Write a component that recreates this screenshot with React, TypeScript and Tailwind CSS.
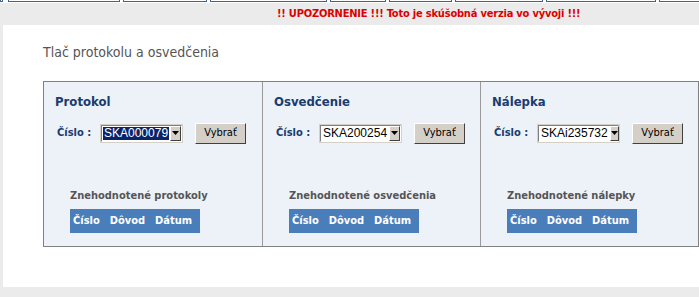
import React from "react";

const FONT = { fontFamily: '"DejaVu Sans Condensed", "DejaVu Sans", Tahoma, sans-serif', fontStretch: "condensed" } as React.CSSProperties;

// top tab strip (bottom edges of the menu tabs)
const TABS = [
  [0, 3],
  [8, 112],
  [123, 84],
  [210, 117],
  [330, 56],
  [389, 63],
  [455, 88],
  [546, 110],
  [659, 60],
];

const COLUMNS = [
  { title: "Protokol", value: "SKA000079", focused: true, lost: "Znehodnotené protokoly" },
  { title: "Osvedčenie", value: "SKA200254", focused: false, lost: "Znehodnotené osvedčenia" },
  { title: "Nálepka", value: "SKAi235732", focused: false, lost: "Znehodnotené nálepky" },
];

function Select({ value, focused }: { value: string; focused: boolean }) {
  return (
    <div className="flex items-center h-[17px] w-[81px] bg-white border border-t-[#808080] border-l-[#808080] border-r-[#ffffff] border-b-[#ffffff] outline outline-1 outline-[#d4d0c8]">
      <div className="flex-1 flex items-center h-full px-[1px]">
        <span
          className={`text-[12px] leading-[13px] px-[1px] ${focused ? "bg-[#0a246a] text-white outline outline-1 outline-dotted outline-[#ffffff]" : "text-black"}`}
          style={{ fontFamily: '"Liberation Sans", Arial, sans-serif' }}
        >
          {value}
        </span>
      </div>
      <div className="w-[15px] h-[15px] bg-[#d4d0c8] border border-t-white border-l-white border-r-[#404040] border-b-[#404040] flex items-center justify-center">
        <svg width="7" height="4" viewBox="0 0 7 4">
          <path d="M0 0h7L3.5 4z" fill="#000" />
        </svg>
      </div>
    </div>
  );
}

export default function App() {
  return (
    <div className="w-[699px] h-[297px] bg-[#ebebeb] overflow-hidden" style={FONT}>
      <div className="relative h-[3px] bg-white">
        {TABS.map(([x, w]) => (
          <div
            key={x}
            className="absolute top-0 h-[2px] border-x border-b border-[#41628c] bg-white"
            style={{ left: x, width: w }}
          />
        ))}
      </div>
      <div className="h-[22px] flex items-center pl-[277px]">
        <span className="text-[11px] font-bold text-[#dd0000] tracking-[-0.2px]">
          !! UPOZORNENIE !!! Toto je skúšobná verzia vo vývoji !!!
        </span>
      </div>
      <div className="h-[262px] ml-[3px] bg-white pl-[40px] pt-[19px]">
        <h1 className="text-[14px] leading-[16px] text-[#555555]">Tlač protokolu a osvedčenia</h1>
        <div className="mt-[21px] w-[656px] h-[166px] flex border border-[#808080] bg-[#edf2f9]">
          {COLUMNS.map((c, i) => (
            <div
              key={c.title}
              className={`w-[218px] shrink-0 h-full pl-[11px] pt-[12px] ${i > 0 ? "border-l border-[#9a9a9a]" : ""}`}
            >
              <h2 className="text-[13px] leading-[16px] font-bold text-[#1a3c6e]">{c.title}</h2>
              <div className="mt-[12px] flex items-center h-[22px]">
                <span className="w-[46px] pl-[2px] text-[11px] font-bold text-[#1a3c6e]">Číslo :</span>
                <Select value={c.value} focused={c.focused} />
                <button className="ml-[13px] h-[21px] w-[51px] bg-[#d4d0c8] text-[11px] text-black border border-t-white border-l-white border-r-[#404040] border-b-[#404040]">
                  Vybrať
                </button>
              </div>
              <div className="mt-[45px] pl-[15px]">
                <div className="text-[11px] leading-[14px] font-bold text-[#555555]">{c.lost}</div>
                <div className="mt-[6px] w-[130px] h-[24px] bg-[#4a7ebb] flex items-center gap-[10px] pl-[3px] text-[11px] font-bold text-white">
                  <span>Číslo</span>
                  <span>Dôvod</span>
                  <span>Dátum</span>
                </div>
              </div>
            </div>
          ))}
        </div>
      </div>
    </div>
  );
}
